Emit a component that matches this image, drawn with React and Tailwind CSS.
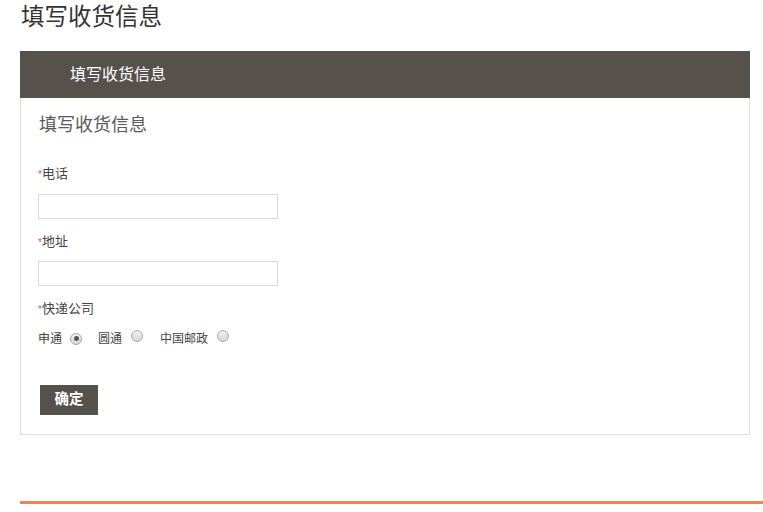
import React from "react";

const font = { fontFamily: '"Liberation Sans", "Noto Sans CJK SC", sans-serif' };

function Radio({ checked }) {
  return (
    <span className="inline-flex items-center justify-center w-[12px] h-[12px] rounded-full border border-[#a9a9a9] bg-gradient-to-b from-[#f2f2f2] to-[#d6d6d6]">
      {checked && <span className="w-[5px] h-[5px] rounded-full bg-[#555]" />}
    </span>
  );
}

function Label({ text }) {
  return (
    <div className="text-[13px] leading-[15px] text-[#444]">
      <span className="text-[#b06a6a] text-[10px]">*</span>
      {text}
    </div>
  );
}

export default function App() {
  return (
    <div className="w-[763px] h-[512px] bg-white overflow-hidden" style={font}>
      <h1 className="pl-[21px] pt-[2px] text-[23.5px] leading-[30px] text-[#333] font-normal">填写收货信息</h1>
      <div className="ml-[20px] w-[730px] mt-[19px]">
        <div className="h-[47px] bg-[#57514c] text-white text-[16px] flex items-center pl-[50px]">
          填写收货信息
        </div>
        <div className="h-[337px] border border-t-0 border-[#e6ddd3] pl-[17px] pt-[16px]">
          <div className="pl-[1px] text-[18px] leading-[22px] text-[#5a5a5a]">填写收货信息</div>
          <div className="mt-[30px]">
            <Label text="电话" />
          </div>
          <div className="mt-[12px] w-[240px] h-[25px] border border-[#d9d9d9]" />
          <div className="mt-[15px]">
            <Label text="地址" />
          </div>
          <div className="mt-[11px] w-[240px] h-[25px] border border-[#d9d9d9]" />
          <div className="mt-[15px]">
            <Label text="快递公司" />
          </div>
          <div className="mt-[13px] flex items-start text-[12px] leading-[14px] text-[#444]">
            <span className="mt-[2px]">申通</span>
            <span className="ml-[8px]"><Radio checked /></span>
            <span className="ml-[16px] mt-[2px]">圆通</span>
            <span className="ml-[9px]"><Radio /></span>
            <span className="ml-[17px] mt-[2px]">中国邮政</span>
            <span className="ml-[9px]"><Radio /></span>
          </div>
          <button className="mt-[39px] ml-[2px] w-[58px] h-[30px] bg-[#57514c] text-white text-[14.5px] font-bold flex items-center justify-center">
            确定
          </button>
        </div>
      </div>
      <div className="ml-[20px] mt-[66px] h-[3px] bg-[#f0845c]" />
    </div>
  );
}
